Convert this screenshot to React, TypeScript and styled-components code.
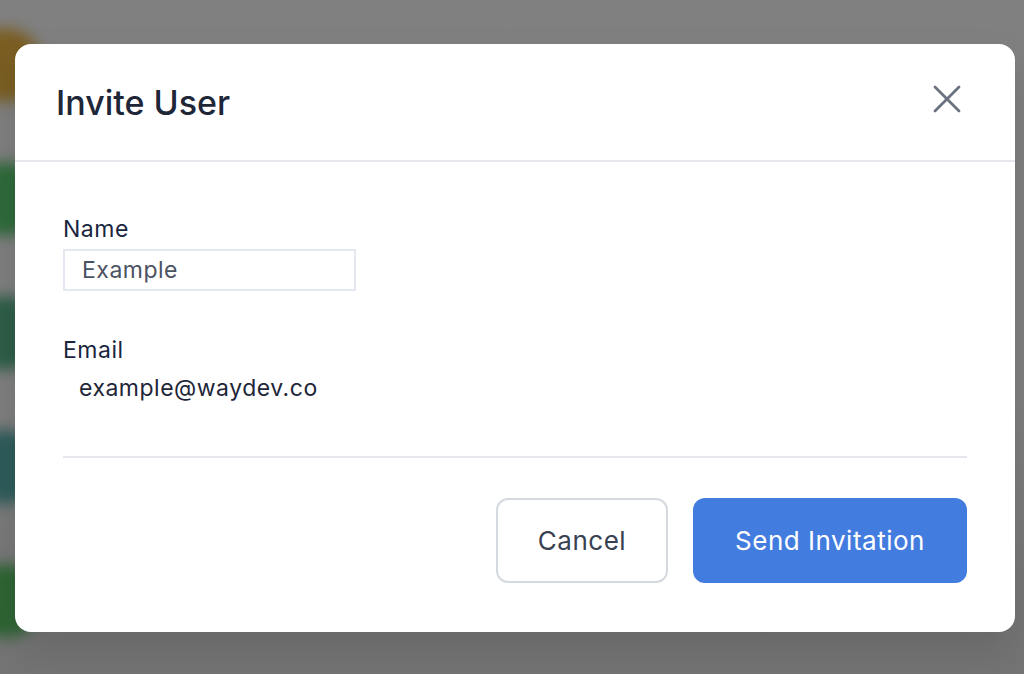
import styled, { createGlobalStyle } from "styled-components";
import { X } from "lucide-react";

const GlobalStyle = createGlobalStyle`
  html, body {
    margin: 0;
    padding: 0;
    width: 100%;
    height: 100%;
  }
  body {
    font-family: Inter, "Noto Sans", sans-serif;
    overflow: hidden;
  }
  * {
    box-sizing: border-box;
  }
`;

const Backdrop = styled.div`
  position: relative;
  width: 1024px;
  height: 674px;
  background: linear-gradient(#808080, #7f7f7f 60%, #747474);
  overflow: hidden;
`;

// blurred page behind the overlay
const BehindPage = styled.div`
  position: absolute;
  left: -32px;
  top: 28px;
  display: flex;
  flex-direction: column;
  gap: 60px;
  filter: blur(7px);
`;

const Blob = styled.div<{ $color: string }>`
  width: 74px;
  height: 74px;
  border-radius: 50%;
  background: ${(p) => p.$color};
`;

const Layer = styled.div`
  position: relative;
  padding: 44px 0 0 15px;
`;

const Modal = styled.div`
  width: 1000px;
  height: 588px;
  background: #fff;
  border-radius: 16px;
  box-shadow: 0 20px 40px rgba(0, 0, 0, 0.12);
  display: flex;
  flex-direction: column;
`;

const Header = styled.header`
  height: 118px;
  flex-shrink: 0;
  display: flex;
  align-items: center;
  justify-content: space-between;
  padding: 0 44px 0 41px;
  border-bottom: 2px solid #e6e8ee;
`;

const Title = styled.h2`
  margin: 0;
  font-size: 34px;
  font-weight: 500;
  color: #1e2638;
`;

const CloseButton = styled.button`
  border: 0;
  background: none;
  padding: 0;
  margin-bottom: 7px;
  display: flex;
  color: #6b7280;
  cursor: pointer;
`;

const Body = styled.div`
  flex: 1;
  padding: 54px 48px 0;
  display: flex;
  flex-direction: column;
`;

const Field = styled.div<{ $gap?: number }>`
  display: flex;
  flex-direction: column;
  margin-bottom: ${(p) => p.$gap ?? 0}px;
`;

const Label = styled.label`
  font-size: 23px;
  line-height: 26px;
  letter-spacing: 0.5px;
  color: #1a2540;
  margin-bottom: 7px;
`;

const TextInput = styled.input`
  width: 293px;
  height: 42px;
  border: 2px solid #e3e8f1;
  padding: 0 17px;
  font-family: inherit;
  font-size: 23px;
  letter-spacing: 0.5px;
  color: #4b5261;
  outline: none;
`;

const Value = styled.div`
  font-size: 23px;
  line-height: 26px;
  letter-spacing: 0.5px;
  padding: 5px 0 0 16px;
  color: #1e2638;
`;

const Divider = styled.hr`
  border: 0;
  border-top: 2px solid #e6e8ee;
  margin: 55px 0 40px;
`;

const Actions = styled.div`
  display: flex;
  justify-content: flex-end;
  gap: 25px;
`;

const Button = styled.button<{ $primary?: boolean }>`
  height: 85px;
  padding: 0;
  width: ${(p) => (p.$primary ? "274px" : "172px")};
  border-radius: 12px;
  font-family: inherit;
  font-size: 26px;
  letter-spacing: 0.5px;
  cursor: pointer;
  border: 2px solid ${(p) => (p.$primary ? "#437cdf" : "#d5d9e0")};
  background: ${(p) => (p.$primary ? "#437cdf" : "#fff")};
  color: ${(p) => (p.$primary ? "#fff" : "#374151")};
`;

const blobs = ["#7a5e22", "#2f6a3a", "#2e5e48", "#2e5c5a", "#2f6535"];

export default function App() {
  return (
    <>
      <GlobalStyle />
      <Backdrop>
        <BehindPage>
          {blobs.map((c, i) => (
            <Blob key={i} $color={c} />
          ))}
        </BehindPage>
        <Layer>
          <Modal>
            <Header>
              <Title>Invite User</Title>
              <CloseButton aria-label="Close">
                <X size={48} strokeWidth={1.4} />
              </CloseButton>
            </Header>
            <Body>
              <Field $gap={46}>
                <Label>Name</Label>
                <TextInput defaultValue="Example" />
              </Field>
              <Field>
                <Label>Email</Label>
                <Value>example@waydev.co</Value>
              </Field>
              <Divider />
              <Actions>
                <Button>Cancel</Button>
                <Button $primary>Send Invitation</Button>
              </Actions>
            </Body>
          </Modal>
        </Layer>
      </Backdrop>
    </>
  );
}
